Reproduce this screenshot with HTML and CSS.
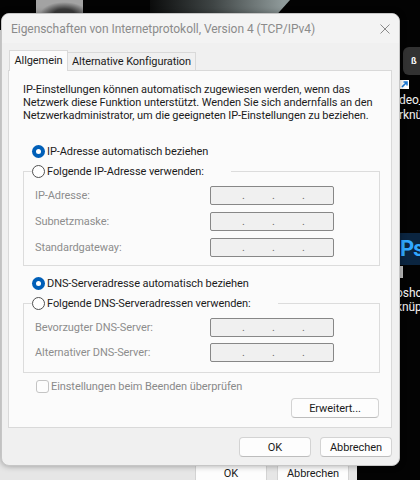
FILE: index.html
```html
<!DOCTYPE html>
<html lang="de">

<head>
    <meta charset="UTF-8">
    <title>Eigenschaften von Internetprotokoll, Version 4 (TCP/IPv4)</title>
    <link rel="stylesheet" href="styles.css">
</head>

<body>
    <div class="desk">
        <!-- Hintergrund: Fotoausschnitt oben, Desktop rechts, altes Fenster unten -->
        <div class="photo-block"></div>
        <div class="photo-streak"></div>

        <div class="chip">ß</div>
        <svg class="shortcut" width="9" height="9" viewBox="0 0 9 9">
            <rect width="9" height="9" fill="#fff"/>
            <path d="M2 7 L6.5 2.5 M3.5 2 H7 V5.5" stroke="#1976d2" stroke-width="1.6" fill="none"/>
        </svg>
        <p class="desk-text t1">deo_</p>
        <p class="desk-text t2">rknü</p>
        <div class="ps">Ps</div>
        <div class="ps-bar"></div>
        <p class="desk-text t3">osho</p>
        <p class="desk-text t4">knüp</p>

        <div class="under">
            <div class="under-btns">
                <button class="btn under-btn">OK</button>
                <button class="btn under-btn">Abbrechen</button>
            </div>
        </div>

        <div class="dialog">
            <div class="titlebar">
                <span>Eigenschaften von Internetprotokoll, Version 4 (TCP/IPv4)</span>
                <svg width="10" height="10" viewBox="0 0 10 10">
                    <path d="M0.5 0.5 L9.5 9.5 M9.5 0.5 L0.5 9.5" stroke="#8a8a8a" stroke-width="1" fill="none"/>
                </svg>
            </div>

            <div class="tabs">
                <div class="tab active">Allgemein</div>
                <div class="tab">Alternative Konfiguration</div>
            </div>

            <div class="panel">
                <p class="intro">IP-Einstellungen können automatisch zugewiesen werden, wenn das Netzwerk diese Funktion unterstützt. Wenden Sie sich andernfalls an den Netzwerkadministrator, um die geeigneten IP-Einstellungen zu beziehen.</p>

                <div class="opt first"><span class="dot on"></span>IP-Adresse automatisch beziehen</div>

                <fieldset class="group">
                    <legend><div class="opt"><span class="dot"></span>Folgende IP-Adresse verwenden:</div></legend>
                    <div class="row"><span class="lbl">IP-Adresse:</span><div class="ip"><span>.</span><span>.</span><span>.</span></div></div>
                    <div class="row"><span class="lbl">Subnetzmaske:</span><div class="ip"><span>.</span><span>.</span><span>.</span></div></div>
                    <div class="row"><span class="lbl">Standardgateway:</span><div class="ip"><span>.</span><span>.</span><span>.</span></div></div>
                </fieldset>

                <div class="opt dns"><span class="dot on"></span>DNS-Serveradresse automatisch beziehen</div>

                <fieldset class="group dns-group">
                    <legend><div class="opt"><span class="dot"></span>Folgende DNS-Serveradressen verwenden:</div></legend>
                    <div class="row"><span class="lbl">Bevorzugter DNS-Server:</span><div class="ip"><span>.</span><span>.</span><span>.</span></div></div>
                    <div class="row"><span class="lbl">Alternativer DNS-Server:</span><div class="ip"><span>.</span><span>.</span><span>.</span></div></div>
                </fieldset>

                <div class="check"><span class="box"></span>Einstellungen beim Beenden überprüfen</div>

                <div class="panel-foot">
                    <button class="btn wide">Erweitert...</button>
                </div>
            </div>

            <div class="foot">
                <button class="btn">OK</button>
                <button class="btn">Abbrechen</button>
            </div>
        </div>
    </div>
</body>

</html>
```

FILE: styles.css
```css
body {
    margin: 0;
    background-color: #000;
    font-family: Roboto, "Liberation Sans", sans-serif;
    font-size: 11px;
    letter-spacing: -0.08px;
    color: #1b1b1b;
}

p {
    margin: 0;
}

.desk {
    position: relative;
    width: 420px;
    height: 480px;
    overflow: hidden;
    background-color: #030303;
}

/* hintergrund */

.photo-block {
    position: absolute;
    left: 36px;
    top: 0;
    width: 47px;
    height: 14px;
    background: radial-gradient(ellipse at 60% 100%, #3b3b3b 0 25%, #a3a3a3 60%);
}

.photo-streak {
    position: absolute;
    left: 150px;
    top: 0;
    width: 140px;
    height: 14px;
    background: linear-gradient(90deg, #0b0c0c, #3f4545 45%, #8f9a9a 95%);
    clip-path: polygon(0 0, 100% 0, 91% 100%, 0 100%);
}

.chip {
    position: absolute;
    left: 403px;
    top: 47px;
    width: 30px;
    height: 28px;
    border-radius: 6px;
    background-color: #323232;
    color: #fff;
    font-size: 9px;
    font-weight: bold;
    line-height: 28px;
    padding-left: 8px;
    box-sizing: border-box;
}

.shortcut {
    position: absolute;
    left: 400px;
    top: 80px;
}

.desk-text {
    position: absolute;
    left: 399px;
    color: #f2f2f2;
    font-size: 12px;
    line-height: 14px;
}

.t1 { top: 93px; }
.t2 { top: 108px; }
.t3 { top: 286px; left: 396px; }
.t4 { top: 300px; left: 396px; }

.ps {
    position: absolute;
    left: 400px;
    top: 233px;
    width: 30px;
    height: 32px;
    background-color: #0b2540;
    color: #31a8ff;
    font-size: 22px;
    font-weight: bold;
    letter-spacing: -1px;
    line-height: 32px;
}

.ps-bar {
    position: absolute;
    left: 400px;
    top: 266px;
    width: 3px;
    height: 12px;
    background-color: #bdbdbd;
}

.under {
    position: absolute;
    left: 0;
    top: 30px;
    width: 357px;
    height: 455px;
    background-color: #e6e6e6;
    display: flex;
    flex-direction: column;
    justify-content: flex-end;
}

.under-btns {
    display: flex;
    justify-content: flex-end;
    gap: 10px;
    padding: 0 8px 2px 0;
}

.under-btn {
    width: 71px;
    height: 20px;
}

/* dialog */

.dialog {
    position: absolute;
    left: 1px;
    top: 13px;
    width: 399px;
    height: 453px;
    box-sizing: border-box;
    border: 1px solid #c6c6c6;
    border-radius: 8px;
    background-color: #f0f0f0;
    overflow: hidden;
    display: flex;
    flex-direction: column;
    box-shadow: 0 0 6px rgba(0, 0, 0, .35);
}

.titlebar {
    height: 29px;
    flex-shrink: 0;
    display: flex;
    align-items: center;
    justify-content: space-between;
    padding: 0 9px 0 9px;
    background-color: #f3f3f3;
    color: #8b8b8b;
    font-size: 12px;
    letter-spacing: -0.05px;
}

.tabs {
    display: flex;
    align-items: flex-end;
    height: 20px;
    margin: 7px 0 0 7px;
}

.tab {
    width: 128px;
    height: 18px;
    box-sizing: border-box;
    border: 1px solid #d9d9d9;
    border-bottom: none;
    border-left: none;
    background-color: #f0f0f0;
    text-align: center;
    line-height: 17px;
}

.tab.active {
    position: relative;
    z-index: 1;
    width: 59px;
    height: 21px;
    margin-bottom: -1px;
    border-left: 1px solid #d9d9d9;
    background-color: #fbfbfb;
    line-height: 19px;
}

.panel {
    height: 358px;
    flex-shrink: 0;
    box-sizing: border-box;
    margin: 0 7px 0 6px;
    border: 1px solid #d9d9d9;
    background-color: #fbfbfb;
    padding: 0 11px 0 14px;
    display: flex;
    flex-direction: column;
}

.intro {
    margin-top: 12px;
    line-height: 13px;
}

.opt {
    display: flex;
    align-items: center;
    gap: 2px;
    height: 16px;
}

.first {
    margin: 21px 0 0 9px;
}

.dns {
    margin: 9px 0 0 9px;
}

.dot {
    width: 13px;
    height: 13px;
    box-sizing: border-box;
    border-radius: 50%;
    border: 1px solid #505050;
    background-color: #fff;
}

.dot.on {
    border: none;
    background-color: #005fb8;
    display: grid;
    place-items: center;
}

.dot.on::after {
    content: "";
    width: 5px;
    height: 5px;
    border-radius: 50%;
    background-color: #fff;
}

.group {
    margin: 4px 0 0;
    padding: 0 0 8px;
    border: 1px solid #dcdcdc;
    min-width: 0;
}

.dns-group {
    padding-bottom: 10px;
}

.group legend {
    padding: 0 27px 0 0;
    margin-left: 8px;
}

.row {
    display: flex;
    align-items: center;
    height: 19px;
    margin-top: 7px;
    padding-left: 11px;
}

.dns-group .row + .row {
    margin-top: 6px;
}

.lbl {
    width: 175px;
    color: #8d8d8d;
}

.ip {
    width: 124px;
    height: 19px;
    box-sizing: border-box;
    border: 1px solid #878787;
    border-radius: 2px;
    background-color: #f0f0f0;
    display: flex;
    padding-left: 31px;
    color: #6a6a6a;
    line-height: 17px;
}

.ip span {
    width: 30px;
}

.check {
    display: flex;
    align-items: center;
    gap: 2px;
    height: 15px;
    margin: 6px 0 0 13px;
    color: #8a8a8a;
}

.box {
    width: 13px;
    height: 13px;
    box-sizing: border-box;
    border: 1px solid #c4c4c4;
    border-radius: 3px;
    background-color: #fdfdfd;
}

.panel-foot {
    display: flex;
    justify-content: flex-end;
    margin-top: 4px;
    padding-right: 1px;
}

.btn {
    width: 72px;
    height: 20px;
    padding: 0;
    border: 1px solid #d3d3d3;
    border-bottom-color: #bdbdbd;
    border-radius: 4px;
    background-color: #fdfdfd;
    font-family: inherit;
    font-size: 11px;
    letter-spacing: -0.08px;
    color: #1b1b1b;
}

.btn.wide {
    width: 88px;
}

.foot {
    display: flex;
    justify-content: flex-end;
    gap: 9px;
    margin-top: 9px;
    padding-right: 7px;
}
```
